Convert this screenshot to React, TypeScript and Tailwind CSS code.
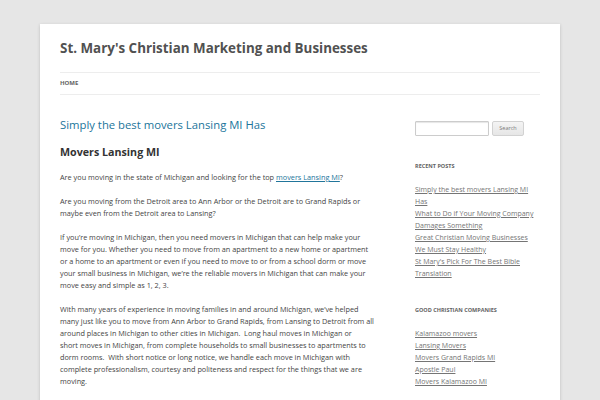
const recentPosts = [
  'Simply the best movers Lansing MI Has',
  'What to Do if Your Moving Company Damages Something',
  'Great Christian Moving Businesses',
  'We Must Stay Healthy',
  "St Mary's Pick For The Best Bible Translation",
];

const companies = [
  'Kalamazoo movers',
  'Lansing Movers',
  'Movers Grand Rapids MI',
  'Apostle Paul',
  'Movers Kalamazoo MI',
];

function Widget({ title, items }: { title: string; items: string[] }) {
  return (
    <div className="mb-[24px]">
      <h3 className="text-[5.5px] leading-[12px] font-bold uppercase text-[#636363] mb-[12px]">{title}</h3>
      <ul>
        {items.map((item) => (
          <li key={item} className="text-[7px] leading-[12px]">
            <a href="#" className="text-[#757575] underline">
              {item}
            </a>
          </li>
        ))}
      </ul>
    </div>
  );
}

export default function App() {
  return (
    <div
      className="h-[400px] bg-[#e6e6e6] pt-[24px] overflow-hidden"
      style={{ fontFamily: '"Open Sans", "Liberation Sans", sans-serif' }}
    >
      <div className="w-[520px] mx-auto bg-white px-[20px] pb-[40px] shadow-[0_1px_3px_rgba(100,100,100,0.3)]">
        {/* header */}
        <header className="pt-[16px]">
          <h1 className="text-[13.4px] leading-[16px] font-bold text-[#515151]">
            St. Mary's Christian Marketing and Businesses
          </h1>
          <nav className="mt-[16px] border-y border-[#ededed] h-[23px] flex items-center">
            <a href="#" className="text-[6px] font-bold uppercase text-[#636363]">
              Home
            </a>
          </nav>
        </header>

        <div className="flex justify-between items-start">
          {/* content */}
          <main className="w-[316px] pt-[23px] text-[7.3px] leading-[12px] text-[#444]">
            <h2 className="text-[11.3px] leading-[14px] text-[#21759b]">Simply the best movers Lansing MI Has</h2>
            <h1 className="mt-[13px] text-[10.7px] leading-[15px] font-bold text-[#333]">Movers Lansing MI</h1>
            <p className="mt-[11px]">
              Are you moving in the state of Michigan and looking for the top{' '}
              <a href="#" className="text-[#21759b] underline">
                movers Lansing MI
              </a>
              ?
            </p>
            <p className="mt-[12px]">
              Are you moving from the Detroit area to Ann Arbor or the Detroit are to Grand Rapids or maybe even from
              the Detroit area to Lansing?
            </p>
            <p className="mt-[12px]">
              If you’re moving in Michigan, then you need movers in Michigan that can help make your move for you.
              Whether you need to move from an apartment to a new home or apartment or a home to an apartment or even
              if you need to move to or from a school dorm or move your small business in Michigan, we’re the reliable
              movers in Michigan that can make your move easy and simple as 1, 2, 3.
            </p>
            <p className="mt-[12px]">
              With many years of experience in moving families in and around Michigan, we’ve helped
              <br />
              many just like you to move from Ann Arbor to Grand Rapids, from Lansing to Detroit from all
              <br />
              around places in Michigan to other cities in Michigan.&nbsp; Long haul moves in Michigan or
              <br />
              short moves in Michigan, from complete households to small businesses to apartments to
              <br />
              dorm rooms.&nbsp; With short notice or long notice, we handle each move in Michigan with
              <br />
              complete professionalism, courtesy and politeness and respect for the things that we are
              <br />
              moving.
            </p>
          </main>

          {/* sidebar */}
          <aside className="w-[125px] pt-[26px]">
            <form className="flex gap-[3px] mb-[24px]" onSubmit={(e) => e.preventDefault()}>
              <input
                type="text"
                className="w-[74px] h-[15px] border border-[#ccc] rounded-[1px] shadow-[inset_0_1px_1px_rgba(0,0,0,0.1)] bg-white"
              />
              <button
                type="submit"
                className="w-[32px] h-[15px] border border-[#d2d2d2] rounded-[2px] bg-gradient-to-b from-[#f4f4f4] to-[#e6e6e6] text-[5.5px] text-[#7c7c7c]"
              >
                Search
              </button>
            </form>
            <Widget title="Recent Posts" items={recentPosts} />
            <Widget title="Good Christian Companies" items={companies} />
          </aside>
        </div>
      </div>
    </div>
  );
}
